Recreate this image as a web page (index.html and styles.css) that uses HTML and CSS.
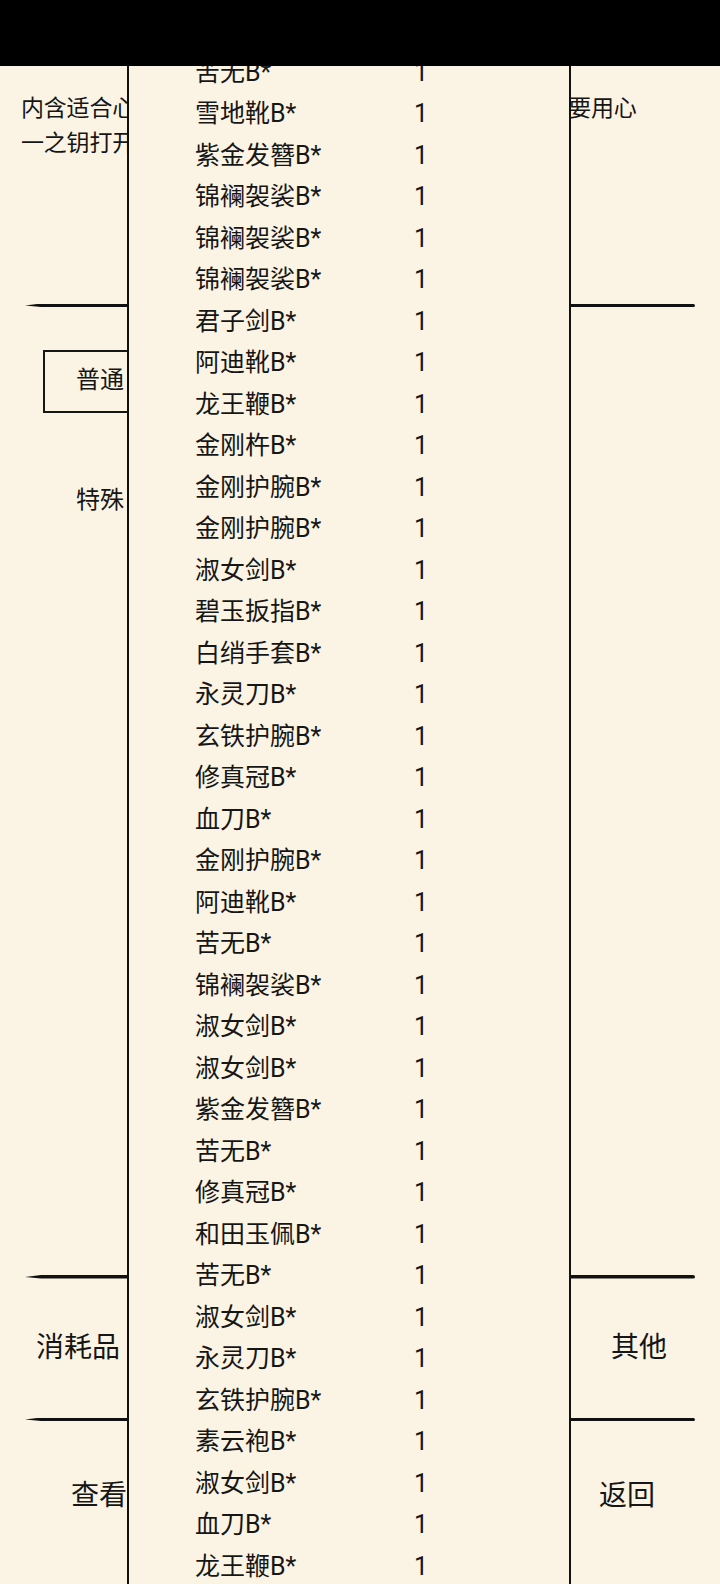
FILE: index.html
```html
<!DOCTYPE html>
<html lang="zh-CN">
<head>
<meta charset="utf-8">
<title>宝箱</title>
<link rel="stylesheet" href="styles.css">
</head>
<body>
<div class="screen">
  <div class="statusbar"></div>
  <main class="page">
    <p class="desc">
      <span class="desc-line">内含适合心法的修炼者使用的各类珍稀装备和秘籍，需要用心</span>
      <span class="desc-line">一之钥打开后随机获得其中一件</span>
    </p>
    <div class="divider"></div>
    <div class="tabs">
      <div class="tab tab-active">普通</div>
      <div class="tab">特殊</div>
    </div>
    <div class="divider divider-low"></div>
    <div class="btnrow btnrow-top">
      <span class="btn btn-left">消耗品</span>
      <span class="btn btn-right">其他</span>
    </div>
    <div class="divider"></div>
    <div class="btnrow btnrow-bottom">
      <span class="btn btn-left">查看</span>
      <span class="btn btn-right">返回</span>
    </div>
  </main>
  <div class="popup">
    <ul class="items">
      <li class="item"><span class="name">苦无B*</span><span class="qty">1</span></li>
      <li class="item"><span class="name">雪地靴B*</span><span class="qty">1</span></li>
      <li class="item"><span class="name">紫金发簪B*</span><span class="qty">1</span></li>
      <li class="item"><span class="name">锦襕袈裟B*</span><span class="qty">1</span></li>
      <li class="item"><span class="name">锦襕袈裟B*</span><span class="qty">1</span></li>
      <li class="item"><span class="name">锦襕袈裟B*</span><span class="qty">1</span></li>
      <li class="item"><span class="name">君子剑B*</span><span class="qty">1</span></li>
      <li class="item"><span class="name">阿迪靴B*</span><span class="qty">1</span></li>
      <li class="item"><span class="name">龙王鞭B*</span><span class="qty">1</span></li>
      <li class="item"><span class="name">金刚杵B*</span><span class="qty">1</span></li>
      <li class="item"><span class="name">金刚护腕B*</span><span class="qty">1</span></li>
      <li class="item"><span class="name">金刚护腕B*</span><span class="qty">1</span></li>
      <li class="item"><span class="name">淑女剑B*</span><span class="qty">1</span></li>
      <li class="item"><span class="name">碧玉扳指B*</span><span class="qty">1</span></li>
      <li class="item"><span class="name">白绡手套B*</span><span class="qty">1</span></li>
      <li class="item"><span class="name">永灵刀B*</span><span class="qty">1</span></li>
      <li class="item"><span class="name">玄铁护腕B*</span><span class="qty">1</span></li>
      <li class="item"><span class="name">修真冠B*</span><span class="qty">1</span></li>
      <li class="item"><span class="name">血刀B*</span><span class="qty">1</span></li>
      <li class="item"><span class="name">金刚护腕B*</span><span class="qty">1</span></li>
      <li class="item"><span class="name">阿迪靴B*</span><span class="qty">1</span></li>
      <li class="item"><span class="name">苦无B*</span><span class="qty">1</span></li>
      <li class="item"><span class="name">锦襕袈裟B*</span><span class="qty">1</span></li>
      <li class="item"><span class="name">淑女剑B*</span><span class="qty">1</span></li>
      <li class="item"><span class="name">淑女剑B*</span><span class="qty">1</span></li>
      <li class="item"><span class="name">紫金发簪B*</span><span class="qty">1</span></li>
      <li class="item"><span class="name">苦无B*</span><span class="qty">1</span></li>
      <li class="item"><span class="name">修真冠B*</span><span class="qty">1</span></li>
      <li class="item"><span class="name">和田玉佩B*</span><span class="qty">1</span></li>
      <li class="item"><span class="name">苦无B*</span><span class="qty">1</span></li>
      <li class="item"><span class="name">淑女剑B*</span><span class="qty">1</span></li>
      <li class="item"><span class="name">永灵刀B*</span><span class="qty">1</span></li>
      <li class="item"><span class="name">玄铁护腕B*</span><span class="qty">1</span></li>
      <li class="item"><span class="name">素云袍B*</span><span class="qty">1</span></li>
      <li class="item"><span class="name">淑女剑B*</span><span class="qty">1</span></li>
      <li class="item"><span class="name">血刀B*</span><span class="qty">1</span></li>
      <li class="item"><span class="name">龙王鞭B*</span><span class="qty">1</span></li>
    </ul>
  </div>
</div>
</body>
</html>
```
FILE: styles.css
```css
html, body {
  margin: 0;
  padding: 0;
}
body {
  background: #fbf4e4;
  color: #161616;
  font-family: Roboto, "Noto Sans CJK SC", "Noto Sans", sans-serif;
}
.screen {
  position: relative;
  width: 720px;
  height: 1584px;
  overflow: hidden;
  background: #fbf4e4;
}
.statusbar {
  height: 66px;
  background: #000;
}
.page {
  display: flex;
  flex-direction: column;
}
.desc {
  margin: 24.5px 0 0 21px;
  font-size: 23px;
  line-height: 35px;
  letter-spacing: -0.2px;
  white-space: nowrap;
  display: flex;
  flex-direction: column;
}
.desc-line {
  display: block;
}
.divider {
  margin-left: 25px;
  width: 670px;
  height: 3.5px;
  background: #111;
  flex: none;
  clip-path: polygon(0 60%, 16px 0, 100% 0, 100% 100%, 16px 100%);
  border-radius: 0 2px 2px 0;
}
.desc + .divider {
  margin-top: 143px;
}
.tabs {
  margin-top: 43px;
  display: flex;
  flex-direction: column;
}
.tab {
  margin-left: 43px;
  padding-left: 33px;
  font-size: 24px;
  line-height: 40px;
  margin-top: 67px;
}
.tab-active {
  margin-top: 0;
  box-sizing: border-box;
  width: 140px;
  height: 63px;
  line-height: 57px;
  padding-left: 31px;
  border: 2.5px solid #161616;
  border-right: none;
}
.divider-low {
  margin-top: 755px;
}
.btnrow {
  display: flex;
  align-items: center;
  font-size: 28px;
  flex: none;
}
.btnrow-top {
  height: 139px;
}
.btnrow-bottom {
  height: 149px;
}
.btn {
  display: block;
  width: 360px;
  box-sizing: border-box;
  line-height: 40px;
}
.btnrow-top .btn-left {
  padding-left: 36px;
}
.btnrow-top .btn-right {
  padding-left: 251px;
}
.btnrow-bottom .btn-left {
  padding-left: 71px;
}
.btnrow-bottom .btn-right {
  padding-left: 239px;
}
.popup {
  position: absolute;
  top: 66px;
  left: 127px;
  width: 444px;
  bottom: 0;
  box-sizing: border-box;
  border-left: 2px solid #111;
  border-right: 2px solid #111;
  background: #fbf4e4;
  overflow: hidden;
}
.items {
  list-style: none;
  margin: -14.5px 0 0;
  padding: 0;
}
.item {
  display: flex;
  height: 41.5px;
  line-height: 41.5px;
  font-size: 25px;
  white-space: nowrap;
}
.name {
  margin-left: 66px;
  width: 218px;
}
.qty {
  width: 16px;
  text-align: center;
}
```
